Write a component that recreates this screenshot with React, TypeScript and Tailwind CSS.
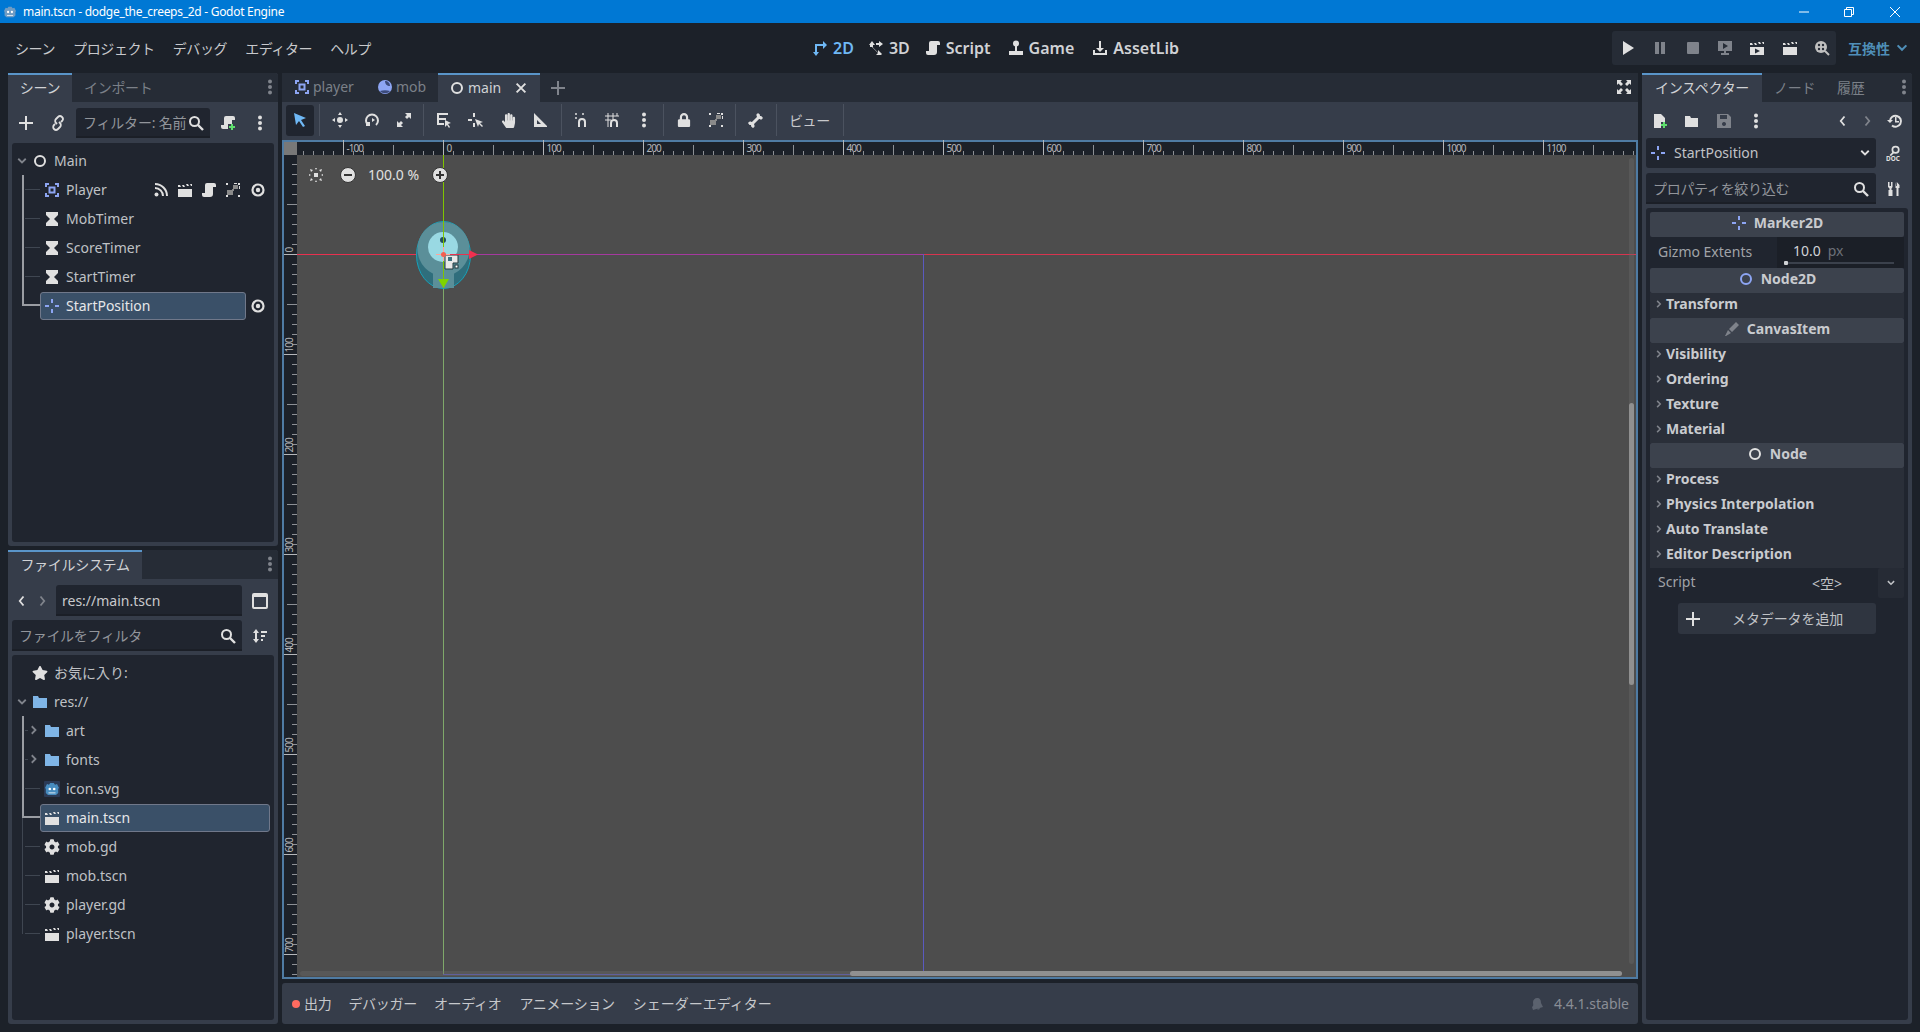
import type { ReactNode } from "react";
import { FaBone, FaCog, FaHandPaper, FaLock, FaStar } from "react-icons/fa";

const FONT = { fontFamily: '"Noto Sans", "Noto Sans CJK JP", sans-serif' };

function Svg({ children, className = "w-4 h-4", fill = "#e0e0e0" }: { children: ReactNode; className?: string; fill?: string }) {
    return (
        <svg viewBox="0 0 16 16" className={`${className} shrink-0`} fill={fill}>
            {children}
        </svg>
    );
}

const Ring = ({ color = "#e0e0e0" }: { color?: string }) => (
    <Svg fill="none">
        <circle cx="8" cy="8" r="5" stroke={color} strokeWidth="2" />
    </Svg>
);
const Marker = ({ color = "#8da5f3" }: { color?: string }) => (
    <Svg fill={color}>
        <path d="M7 1h2v4H7zM7 11h2v4H7zM1 7h4v2H1zM11 7h4v2h-4z" />
    </Svg>
);
const Body2D = () => (
    <Svg fill="#8da5f3">
        <path d="M1 1h4v2H3v2H1zM11 1h4v4h-2V3h-2zM1 11h2v2h2v2H1zM13 11h2v4h-4v-2h2z" />
        <path fillRule="evenodd" d="M4.500 4.500h7v7h-7zM6.500 6.500v3h3v-3z" />
    </Svg>
);
const Timer = () => (
    <Svg>
        <path d="M2 1h12v3l-4 4 4 4v3H2v-3l4-4-4-4z" />
    </Svg>
);
const Eye = () => (
    <Svg fill="none">
        <circle cx="8" cy="8" r="5.500" stroke="#e0e0e0" strokeWidth="2.200" />
        <circle cx="8" cy="8" r="2.200" fill="#e0e0e0" />
    </Svg>
);
const Dots = ({ fill = "#e0e0e0" }: { fill?: string }) => (
    <Svg fill={fill}>
        <circle cx="8" cy="2.500" r="2" />
        <circle cx="8" cy="8" r="2" />
        <circle cx="8" cy="13.500" r="2" />
    </Svg>
);
const Plus = () => (
    <Svg>
        <path d="M7 1h2v6h6v2H9v6H7V9H1V7h6z" />
    </Svg>
);
const Search = () => (
    <Svg fill="none">
        <circle cx="6.500" cy="6.500" r="4.500" stroke="#e0e0e0" strokeWidth="2" />
        <path d="M10 10l5 5" stroke="#e0e0e0" strokeWidth="2.400" />
    </Svg>
);
const Folder = () => (
    <Svg fill="#7fb5e6">
        <path d="M1 2h5l1 2h8v10H1z" />
    </Svg>
);
const Clapper = () => (
    <Svg>
        <path d="M1 7h14v8H1zM1 3h2l1 2H1zM5 3h2l1 2H6zM9 2h2l1 2h-2zM13 2h2v2h-1z" />
    </Svg>
);
const Scroll = ({ fill = "#e0e0e0" }: { fill?: string }) => (
    <Svg fill={fill}>
        <path d="M6 1h7a2 2 0 0 1 2 2v2h-3v7a3 3 0 0 1-3 3H3a2 2 0 0 1-2-2v-2h3V3a2 2 0 0 1 2-2z" />
    </Svg>
);
const Chevron = ({ dir, fill = "#80848c", className = "w-3 h-3" }: { dir: "r" | "d" | "l"; fill?: string; className?: string }) => {
    const d = dir === "r" ? "M5 3l5 5-5 5" : dir === "d" ? "M3 5l5 5 5-5" : "M10 2L5 8l5 6";
    return (
        <svg viewBox="0 0 16 16" className={`${className} shrink-0`} fill="none">
            <path d={d} stroke={fill} strokeWidth="2.400" />
        </svg>
    );
};
const Snap = () => (
    <Svg>
        <path d="M1 1h2v2H1zM13 1h2v2h-2zM1 13h2v2H1zM13 13h2v2h-2zM9 1h3v1H9zM14 4h1v3h-1z" />
        <path d="M8 3h5v4H8zM2 8h6v5H2zM7 7h2v2H7z" fill="#8a8a8a" />
    </Svg>
);
const GodotMark = ({ className = "w-4 h-4", bg, body = "#478cbf" }: { className?: string; bg?: string; body?: string }) => (
    <svg viewBox="0 0 16 16" className={`${className} shrink-0`}>
        {bg && <rect width="16" height="16" rx="1" fill={bg} />}
        <path d="M3 3l2 .8L6.200 2h3.600L11 3.800 13 3l2 4-.8 .8V12l-2.200 2H4l-2.200-2V7.800L1 7z" fill={body} />
        <circle cx="5.800" cy="8" r="1.300" fill="#fff" />
        <circle cx="10.200" cy="8" r="1.300" fill="#fff" />
        <path d="M4.500 11.500h7v.8h-7z" fill="#fff" />
    </svg>
);
const Clap = ({ play }: { play?: boolean }) => (
    <Svg>
        <path d="M1 7h14v8H1zM1 3h2l1 2H1zM5 3h2l1 2H6zM9 2h2l1 2h-2zM13 2h2v2h-1z" />
        {play && <path d="M6 8.500l5 2.500-5 2.500z" fill="#262c36" />}
    </Svg>
);

const Sep = () => <div className="w-px h-[32px] bg-[#4b525f] shrink-0" />;

function Tool({ children }: { children: ReactNode }) {
    return <div className="w-[32px] h-[31px] flex items-center justify-center shrink-0">{children}</div>;
}

const thickV = "bg-[#9a9da3] w-[2px]";
const thinV = "bg-[#3f4651] w-px";

type RowProps = {
    icon: ReactNode;
    label: string;
    selected?: boolean;
    upper?: string;
    lower?: string;
    hline?: "thick" | "thin";
    arrow?: boolean;
    boxW?: string;
    extras?: ReactNode;
    eye?: boolean;
};

function Row({ icon, label, selected, upper, lower, hline, arrow, boxW = "w-[206px]", extras, eye }: RowProps) {
    return (
        <div className="relative h-[29px] pl-[28px] flex items-center">
            {upper && <span className={`absolute left-[10px] top-0 h-[15px] ${upper}`} />}
            {lower && <span className={`absolute left-[10px] top-[15px] h-[14px] ${lower}`} />}
            {hline === "thick" && <span className="absolute left-[10px] top-[13px] w-[18px] h-[2px] bg-[#9a9da3]" />}
            {hline === "thin" && <span className="absolute left-[13px] top-[14px] w-[15px] h-px bg-[#3f4651]" />}
            {arrow && (
                <span className="absolute left-[16px] top-[8px] bg-[#20252f]">
                    <Chevron dir="r" />
                </span>
            )}
            <div
                className={`${boxW} h-[28px] pl-[3px] pr-[4px] flex items-center gap-[6px] rounded-[3px] border ${
                    selected ? "bg-[#3a5068] border-[#70788a] text-[#e6e7e9]" : "border-transparent text-[#bfc1c5]"
                }`}
            >
                {icon}
                <span className="text-[14px] leading-none">{label}</span>
                {extras && <div className="ml-auto flex items-center gap-[8px]">{extras}</div>}
            </div>
            {eye && (
                <div className="ml-[4px]">
                    <Eye />
                </div>
            )}
        </div>
    );
}

function RootRow({ icon, label, chevron = true }: { icon: ReactNode; label: string; chevron?: boolean }) {
    return (
        <div className="h-[29px] pl-[4px] flex items-center text-[#bfc1c5]">
            <div className="w-[12px] mr-[4px]">{chevron && <Chevron dir="d" />}</div>
            {icon}
            <span className="ml-[6px] text-[14px] leading-none">{label}</span>
        </div>
    );
}

function DockTabs({ children }: { children: ReactNode }) {
    return <div className="h-[29px] bg-[#262c36] rounded-t-[3px] flex items-stretch shrink-0 relative">{children}</div>;
}

function ActiveTab({ label, w }: { label: string; w: string }) {
    return (
        <div className={`${w} bg-[#363d4a] border-t-2 border-[#5a95c9] pb-[2px] flex items-center justify-center text-[14px] tracking-[-0.3px] text-[#d0d2d5]`}>
            {label}
        </div>
    );
}

function InactiveTab({ label, ml }: { label: string; ml: string }) {
    return <span className={`${ml} self-center pb-[1px] text-[14px] tracking-[-0.3px] text-[#7b8088]`}>{label}</span>;
}

function Field({ children, className }: { children: ReactNode; className: string }) {
    return (
        <div className={`${className} bg-[#20252f] border-b-2 border-[#1b1f27] rounded-t-[3px] pt-[2px] flex items-center text-[14px]`}>
            {children}
        </div>
    );
}

function Section({ icon, title }: { icon: ReactNode; title: string }) {
    return (
        <div className="h-[25px] bg-[#3c424d] rounded-[2px] pb-[4px] flex items-center justify-center gap-[7px] text-[14px] font-bold text-[#c9cbcf] shrink-0">
            {icon}
            <span>{title}</span>
        </div>
    );
}

function Prop({ label }: { label: string }) {
    return (
        <div className="h-[25px] bg-[#2a2f39] pb-[4px] flex items-center pl-[4px] gap-[2px] text-[14px] font-bold text-[#c9cbcf] shrink-0">
            <Chevron dir="r" className="w-[10px] h-[10px]" />
            <span>{label}</span>
        </div>
    );
}

function TopRuler() {
    const ticks = [];
    for (let v = -140; v <= 1190; v += 10) {
        const x = v + 146.5;
        const h = v % 100 === 0 ? 15 : v % 50 === 0 ? 10 : 4;
        ticks.push(<line key={v} x1={x} x2={x} y1={15 - h} y2={15} stroke={v % 100 === 0 ? "#b5b7ba" : "#8d9095"} />);
        if (v % 100 === 0) {
            ticks.push(
                <text key={`t${v}`} x={x + 3} y={12} fontSize="10" letterSpacing="-1" fill="#b5b7ba">
                    {v}
                </text>
            );
        }
    }
    return (
        <svg width="1339" height="15" className="block overflow-visible" style={FONT}>
            {ticks}
        </svg>
    );
}

function LeftRuler() {
    const ticks = [];
    for (let v = -90; v <= 720; v += 10) {
        const y = v + 99.5;
        const w = v % 100 === 0 ? 13 : v % 50 === 0 ? 10 : 5;
        ticks.push(<line key={v} x1={13 - w} x2={13} y1={y} y2={y} stroke={v % 100 === 0 ? "#b5b7ba" : "#8d9095"} />);
        if (v % 100 === 0) {
            ticks.push(
                <text key={`t${v}`} fontSize="10" letterSpacing="-1" fill="#b5b7ba" transform={`translate(9 ${y - 2}) rotate(-90)`}>
                    {v}
                </text>
            );
        }
    }
    return (
        <svg width="13" height="822" className="block bg-[#1c2129] shrink-0 overflow-visible" style={FONT}>
            {ticks}
        </svg>
    );
}

function Canvas() {
    return (
        <svg width="1339" height="822" className="absolute inset-0">
            <line x1="146.5" x2="146.5" y1="0" y2="99" stroke="#7fc400" />
            <line x1="146.5" x2="146.5" y1="99" y2="819" stroke="#7fa86a" />
            <line x1="0" x2="172" y1="99.5" y2="99.5" stroke="#e8304f" />
            <line x1="172" x2="626" y1="99.5" y2="99.5" stroke="#a5399f" />
            <line x1="626" x2="1339" y1="99.5" y2="99.5" stroke="#d8344f" />
            <line x1="626.5" x2="626.5" y1="99" y2="819" stroke="#5a5ac0" />
            <line x1="146" x2="626" y1="819.5" y2="819.5" stroke="#5a5ac0" />
            <g transform="translate(146 99)">
                <ellipse cx="0.500" cy="1" rx="27" ry="33.500" fill="#2f6e7c" stroke="#17a2ba" />
                <ellipse cx="0.500" cy="-5" rx="26" ry="27" fill="#5b8f99" />
                <rect x="-10" y="16" width="21" height="18" fill="#5b8f99" />
                <circle cx="0" cy="-7" r="15" fill="#99d9e3" />
                <circle cx="0" cy="-14" r="3" fill="#22505a" />
                <line x1="0.500" x2="0.500" y1="-34" y2="34" stroke="#7fc400" />
                <path d="M2 1h13v8h-5v6H2z" fill="#e8e8e8" stroke="#22373d" />
                <rect x="5" y="3" width="4" height="4" fill="#3b7080" />
                <rect x="12" y="11" width="3" height="3" fill="#fff" stroke="#22373d" />
                <path d="M-7 0H28V1H-7z" fill="#e8304f" />
                <path d="M0-7h1v14H0zM-7 0h14v1H-7z" fill="#ffa59a" />
                <circle cx="0.500" cy="0.500" r="2.500" fill="#f25f52" />
                <path d="M26-4l9 4.500-9 4.500z" fill="#f0304f" />
                <path d="M-5 25h11l-5.500 9z" fill="#7fd400" />
            </g>
        </svg>
    );
}

function Viewport() {
    return (
        <div className="h-[839px] border-2 border-[#4f7ba3] flex flex-col shrink-0">
            <div className="flex h-[13px]">
                <div className="w-[13px] h-[13px] bg-[#787878] shrink-0" />
                <div className="-mt-[2px] h-[15px]">
                    <TopRuler />
                </div>
            </div>
            <div className="flex flex-1 min-h-0">
                <LeftRuler />
                <div className="relative flex-1 bg-[#4d4d4d] overflow-hidden">
                    <Canvas />
                    <div className="absolute left-[11px] top-[12px] flex items-center text-[#e0e0e0] text-[14px]">
                        <Svg>
                            <path d="M2 2l3 1-2 2zM14 2l-1 3-2-2zM2 14l1-3 2 2zM14 14l-3-1 2-2zM6 6h4v4H6zM1 7l2 1-2 1zM15 7l-2 1 2 1zM7 1l1 2 1-2zM7 15l1-2 1 2z" />
                        </Svg>
                        <div className="ml-[16px] w-[16px] h-[16px] rounded-full bg-[#e0e0e0] flex items-center justify-center border border-[#333]">
                            <span className="w-[8px] h-[2px] bg-[#333]" />
                        </div>
                        <span className="ml-[12px] w-[59px] text-[14px] leading-none">100.0 %</span>
                        <div className="ml-[5px] w-[16px] h-[16px] rounded-full bg-[#e0e0e0] flex items-center justify-center border border-[#333] relative">
                            <span className="w-[8px] h-[2px] bg-[#333]" />
                            <span className="absolute left-[6px] top-[3px] w-[2px] h-[8px] bg-[#333]" />
                        </div>
                    </div>
                    <div className="absolute left-[3px] right-[14px] bottom-[1px] h-[5px] bg-[#6a6a6a]/40 rounded-full flex justify-end">
                        <div className="w-[772px] h-full bg-[#909090] rounded-full" />
                    </div>
                    <div className="absolute right-[2px] top-[3px] bottom-[13px] w-[5px] bg-[#6a6a6a]/40 rounded-full">
                        <div className="mt-[245px] h-[282px] bg-[#909090] rounded-full" />
                    </div>
                </div>
            </div>
        </div>
    );
}

function Workspace({ icon, label, active, ml }: { icon: ReactNode; label: string; active?: boolean; ml: string }) {
    return (
        <div className={`${ml} flex items-center gap-[5px] text-[16px] font-semibold ${active ? "text-[#6fb8f5]" : "text-[#d0d2d5]"}`}>
            {icon}
            <span>{label}</span>
        </div>
    );
}

function BottomTab({ label, ml }: { label: string; ml: string }) {
    return <span className={`${ml} text-[14px] tracking-[-0.3px] text-[#c6c8cc]`}>{label}</span>;
}

export default function App() {
    return (
        <div className="w-[1920px] h-[1032px] bg-[#1c2129] flex flex-col overflow-hidden text-[#c8c9cc]" style={FONT}>
            {/* title bar */}
            <div className="h-[23px] bg-[#0078d4] flex items-center text-white shrink-0">
                <div className="ml-[3px] mr-[6px]">
                    <GodotMark className="w-[14px] h-[14px]" body="#6f9cc4" />
                </div>
                <span className="text-[12px] tracking-[-0.28px]">main.tscn - dodge_the_creeps_2d - Godot Engine</span>
                <div className="ml-auto flex items-center">
                    <svg viewBox="0 0 12 12" className="w-[12px] h-[12px] mr-[33px]" stroke="#fff" fill="none">
                        <path d="M1 6h10" />
                    </svg>
                    <svg viewBox="0 0 12 12" className="w-[12px] h-[12px] mr-[34px]" stroke="#fff" fill="none">
                        <path d="M1.500 3.500h7v7h-7zM3.500 3.500v-2h7v7h-2" />
                    </svg>
                    <svg viewBox="0 0 12 12" className="w-[12px] h-[12px] mr-[19px]" stroke="#fff" fill="none">
                        <path d="M1 1l10 10M11 1L1 11" />
                    </svg>
                </div>
            </div>

            {/* menu bar */}
            <div className="h-[50px] flex items-center shrink-0">
                <div className="w-[812px] pl-[15px] flex gap-[18px] text-[14px] tracking-[-0.4px] text-[#c8c9cc]">
                    <span>シーン</span>
                    <span>プロジェクト</span>
                    <span>デバッグ</span>
                    <span>エディター</span>
                    <span>ヘルプ</span>
                </div>
                <Workspace
                    ml="ml-0"
                    active
                    label="2D"
                    icon={
                        <Svg fill="#6fb8f5">
                            <path d="M3 4h8V1l4 4-4 4V6H5v6h2l-3 4-3-4h2z" />
                        </Svg>
                    }
                />
                <Workspace
                    ml="ml-[14px]"
                    label="3D"
                    icon={
                        <Svg>
                            <path d="M1 5l3-4 3 4H5v2.500l5 5V10l4 4-1 1H8l2-2-6-6v0H2V5z" />
                            <path d="M8 3h3V1l4 3-4 3V5H8z" />
                        </Svg>
                    }
                />
                <Workspace ml="ml-[15px]" label="Script" icon={<Scroll />} />
                <Workspace
                    ml="ml-[17px]"
                    label="Game"
                    icon={
                        <Svg>
                            <circle cx="8" cy="3.500" r="3" />
                            <path d="M7 5h2v6H7zM1 11h14v4H1z" />
                        </Svg>
                    }
                />
                <Workspace
                    ml="ml-[18px]"
                    label="AssetLib"
                    icon={
                        <Svg>
                            <path d="M7 1h2v7h3l-4 4-4-4h3zM1 10h2v3h10v-3h2v5H1z" />
                        </Svg>
                    }
                />
                <div className="ml-auto w-[224px] h-[34px] bg-[#262c36] rounded-[3px] flex items-center justify-between pl-[8px] pr-[6px]">
                    <Svg>
                        <path d="M3 1l11 7-11 7z" />
                    </Svg>
                    <Svg fill="#7f838b">
                        <path d="M3 2h4v12H3zM9 2h4v12H9z" />
                    </Svg>
                    <Svg fill="#7f838b">
                        <rect x="2" y="2" width="12" height="12" rx="1" />
                    </Svg>
                    <Svg fill="#7f838b">
                        <path d="M1 1h14v10H9v2h3v2H4v-2h3v-2H1zM6 3v6l5-3z" fillRule="evenodd" />
                    </Svg>
                    <Clap play />
                    <Clap />
                    <Svg fill="#c0c0c0">
                        <circle cx="7" cy="7" r="6" />
                        <circle cx="5" cy="5" r="1.200" fill="#262c36" />
                        <circle cx="9" cy="5" r="1.200" fill="#262c36" />
                        <circle cx="5" cy="9" r="1.200" fill="#262c36" />
                        <circle cx="9" cy="9" r="1.200" fill="#262c36" />
                        <path d="M11 11l4 4" stroke="#c0c0c0" strokeWidth="2" />
                    </Svg>
                </div>
                <span className="ml-[12px] text-[14px] font-semibold text-[#4f8fb8]">互換性</span>
                <div className="ml-[5px] mr-[11px]">
                    <Chevron dir="d" fill="#4f8fb8" className="w-[14px] h-[14px]" />
                </div>
            </div>

            {/* main area */}
            <div className="flex-1 min-h-0 flex gap-[4px] px-[8px] pb-[8px]">
                {/* left docks */}
                <div className="w-[270px] flex flex-col gap-[4px] shrink-0">
                    <div className="h-[473px] bg-[#363d4a] rounded-[3px] flex flex-col shrink-0">
                        <DockTabs>
                            <ActiveTab label="シーン" w="w-[64px]" />
                            <InactiveTab label="インポート" ml="ml-[12px]" />
                            <div className="absolute right-0 top-[6px]">
                                <Dots fill="#80848c" />
                            </div>
                        </DockTabs>
                        <div className="h-[41px] flex items-center shrink-0">
                            <div className="ml-[10px]">
                                <Plus />
                            </div>
                            <div className="ml-[16px]">
                                <Svg fill="none">
                                    <path d="M7 9l-1-1a2.800 2.800 0 0 1 0-4l2-2a2.800 2.800 0 0 1 4 4l-1 1M9 7l1 1a2.800 2.800 0 0 1 0 4l-2 2a2.800 2.800 0 0 1-4-4l1-1" stroke="#e0e0e0" strokeWidth="1.800" />
                                </Svg>
                            </div>
                            <Field className="ml-[10px] w-[134px] h-[30px] pl-[7px] pr-[6px] text-[#92959b]">
                                <span className="flex-1 whitespace-nowrap overflow-hidden tracking-[-0.2px]">フィルター: 名前</span>
                                <Search />
                            </Field>
                            <div className="ml-[10px]">
                                <Svg>
                                    <path d="M6 1h7a2 2 0 0 1 2 2v2h-3v4H8v5H3a2 2 0 0 1-2-2v-2h3V3a2 2 0 0 1 2-2z" />
                                    <path d="M11 9h2v2h2v2h-2v2h-2v-2H9v-2h2z" fill="#5fe06e" />
                                </Svg>
                            </div>
                            <div className="ml-[16px]">
                                <Dots />
                            </div>
                        </div>
                        <div className="mx-[4px] flex-1 min-h-0 mb-[4px] bg-[#20252f] rounded-[3px] pt-[3px]">
                            <RootRow icon={<Ring />} label="Main" />
                            <Row
                                icon={<Body2D />}
                                label="Player"
                                upper={thickV}
                                lower={thickV}
                                hline="thin"
                                eye
                                extras={
                                    <>
                                        <Svg>
                                            <circle cx="3.500" cy="12.500" r="2" />
                                            <path d="M2 6a8 8 0 0 1 8 8M2 2a12 12 0 0 1 12 12" stroke="#e0e0e0" strokeWidth="2" fill="none" />
                                        </Svg>
                                        <Clap />
                                        <Scroll />
                                        <Snap />
                                    </>
                                }
                            />
                            <Row icon={<Timer />} label="MobTimer" upper={thickV} lower={thickV} hline="thin" />
                            <Row icon={<Timer />} label="ScoreTimer" upper={thickV} lower={thickV} hline="thin" />
                            <Row icon={<Timer />} label="StartTimer" upper={thickV} lower={thickV} hline="thin" />
                            <Row icon={<Marker />} label="StartPosition" upper={thickV} hline="thick" selected eye />
                        </div>
                    </div>

                    <div className="flex-1 min-h-0 bg-[#363d4a] rounded-[3px] flex flex-col">
                        <DockTabs>
                            <ActiveTab label="ファイルシステム" w="w-[134px]" />
                            <div className="absolute right-0 top-[6px]">
                                <Dots fill="#80848c" />
                            </div>
                        </DockTabs>
                        <div className="flex items-center h-[31px] shrink-0 mt-[6px]">
                            <div className="ml-[8px]">
                                <Chevron dir="l" fill="#e0e0e0" className="w-[12px] h-[16px]" />
                            </div>
                            <div className="ml-[8px]">
                                <Chevron dir="l" fill="#80848c" className="w-[12px] h-[16px] rotate-180" />
                            </div>
                            <Field className="ml-[8px] w-[186px] h-[31px] pl-[6px] text-[#c8c9cc]">res://main.tscn</Field>
                            <div className="ml-[10px]">
                                <Svg fill="none">
                                    <rect x="1" y="1" width="14" height="14" rx="1" stroke="#e0e0e0" strokeWidth="2" />
                                    <path d="M1 2h14v2H1z" fill="#e0e0e0" />
                                </Svg>
                            </div>
                        </div>
                        <div className="flex items-center h-[31px] shrink-0 ml-[4px] mt-[4px]">
                            <Field className="w-[230px] h-[31px] pl-[7px] pr-[6px] text-[#92959b]">
                                <span className="flex-1 tracking-[-0.3px]">ファイルをフィルタ</span>
                                <Search />
                            </Field>
                            <div className="ml-[10px]">
                                <Svg>
                                    <path d="M4 1l3 4H5v6h2l-3 4-3-4h2V5H1zM9 3h6v2H9zM9 7h4v2H9zM9 11h2v2H9z" />
                                </Svg>
                            </div>
                        </div>
                        <div className="mx-[4px] mt-[4px] flex-1 min-h-0 mb-[4px] bg-[#20252f] rounded-[3px] pt-[3px]">
                            <RootRow
                                chevron={false}
                                label="お気に入り:"
                                icon={
                                    <span className="text-[#e0e0e0] text-[16px]">
                                        <FaStar />
                                    </span>
                                }
                            />
                            <RootRow icon={<Folder />} label="res://" />
                            <Row icon={<Folder />} label="art" upper={thickV} lower={thickV} hline="thin" arrow />
                            <Row icon={<Folder />} label="fonts" upper={thickV} lower={thickV} hline="thin" arrow />
                            <Row icon={<GodotMark bg="#2b3a55" />} label="icon.svg" upper={thickV} lower={thickV} hline="thin" />
                            <Row icon={<Clapper />} label="main.tscn" upper={thickV} lower={thinV} hline="thick" selected boxW="w-[230px]" />
                            <Row icon={<span className="text-[#e0e0e0] text-[16px]"><FaCog /></span>} label="mob.gd" upper={thinV} lower={thinV} hline="thin" />
                            <Row icon={<Clapper />} label="mob.tscn" upper={thinV} lower={thinV} hline="thin" />
                            <Row icon={<span className="text-[#e0e0e0] text-[16px]"><FaCog /></span>} label="player.gd" upper={thinV} lower={thinV} hline="thin" />
                            <Row icon={<Clapper />} label="player.tscn" upper={thinV} hline="thin" />
                        </div>
                    </div>
                </div>

                {/* center */}
                <div className="flex-1 min-w-0 flex flex-col gap-[4px]">
                    <div className="flex flex-col shrink-0">
                        <div className="h-[29px] flex items-stretch bg-[#262c36]">
                            <div className="w-[95px] pl-[12px] pb-[2px] flex items-center gap-[3px] text-[14px] text-[#7b8088]">
                                <Body2D />
                                <span>player</span>
                            </div>
                            <div className="w-[61px] pb-[2px] flex items-center gap-[3px] text-[14px] text-[#7b8088]">
                                <Svg fill="#8da5f3">
                                    <circle cx="8" cy="8" r="7" />
                                    <path d="M3 12c3-1 7-1 10 0-2 3-8 3-10 0zM8 2c3 0 5 2 5 5-3 0-5-2-5-5z" fill="#3b4a7a" />
                                </Svg>
                                <span>mob</span>
                            </div>
                            <div className="w-[102px] bg-[#363d4a] border-t-2 border-[#5a95c9] pb-[2px] pl-[11px] flex items-center text-[14px] text-[#d0d2d5]">
                                <Ring />
                                <span className="ml-[3px]">main</span>
                                <div className="ml-[13px]">
                                    <Svg fill="none" className="w-[14px] h-[14px]">
                                        <path d="M3 3l10 10M13 3L3 13" stroke="#e0e0e0" strokeWidth="2.200" />
                                    </Svg>
                                </div>
                            </div>
                            <div className="ml-[10px] self-center">
                                <Svg fill="#80848c">
                                    <path d="M7 1h2v6h6v2H9v6H7V9H1V7h6z" />
                                </Svg>
                            </div>
                            <div className="ml-auto mr-[6px] self-center pb-[2px]">
                                <Svg>
                                    <path d="M1 1h5L4.500 2.500 7 5 5 7 2.500 4.500 1 6zM15 1v5l-1.500-1.500L11 7 9 5l2.500-2.500L10 1zM1 15v-5l1.500 1.500L5 9l2 2-2.500 2.500L6 15zM15 15h-5l1.500-1.500L9 11l2-2 2.500 2.500L15 10z" />
                                </Svg>
                            </div>
                        </div>
                        <div className="h-[38px] bg-[#363d4a] flex items-center pl-[4px] pb-[2px]">
                            <div className="w-[28px] h-[31px] bg-[#20252f] rounded-[3px] flex items-center justify-center shrink-0">
                                <Svg fill="#6fb8f5">
                                    <path d="M2 1l12 5-5 2 4 6-2 1-4-6-3 4z" />
                                </Svg>
                            </div>
                            <div className="w-[5px] shrink-0" />
                            <Sep />
                            <div className="w-[4px] shrink-0" />
                            <Tool>
                                <Svg>
                                    <path d="M8 0l2 3H6zM8 16l-2-3h4zM0 8l3-2v4zM16 8l-3 2V6z" />
                                    <circle cx="8" cy="8" r="3" />
                                </Svg>
                            </Tool>
                            <Tool>
                                <Svg fill="none">
                                    <path d="M4 13a6 6 0 1 1 8 0" stroke="#e0e0e0" strokeWidth="2" />
                                    <path d="M8 6l3 2-3 2z" fill="#e0e0e0" />
                                    <path d="M2 10h4v4H2z" fill="#e0e0e0" />
                                </Svg>
                            </Tool>
                            <Tool>
                                <Svg>
                                    <path d="M9 1h6v6l-2-2-2 2-2-2 2-2zM1 9l2 2 2-2 2 2-2 2 2 2H1z" />
                                </Svg>
                            </Tool>
                            <div className="w-[3px] shrink-0" />
                            <Sep />
                            <div className="w-[4px] shrink-0" />
                            <Tool>
                                <Svg>
                                    <path d="M1 1h11v2H3v3h7v2H3v3h5v2H1z" />
                                    <path d="M9 8l6 3-3 1 2 3-1 1-2-3-2 2z" />
                                </Svg>
                            </Tool>
                            <Tool>
                                <Svg>
                                    <path d="M5 1h2v4H5zM0 7h4v2H0zM5 11h2v4H5z" />
                                    <path d="M7 7l8 3-3 1 3 3-1 1-3-3-1 3z" />
                                </Svg>
                            </Tool>
                            <Tool>
                                <span className="text-[#e0e0e0] text-[15px]">
                                    <FaHandPaper />
                                </span>
                            </Tool>
                            <Tool>
                                <Svg>
                                    <path fillRule="evenodd" d="M2 1l13 13v1H2zM5 8v4h4z" />
                                </Svg>
                            </Tool>
                            <div className="w-[5px] shrink-0" />
                            <Sep />
                            <div className="w-[2px] shrink-0" />
                            <Tool>
                                <Svg fill="none">
                                    <path d="M3 2h2M3 6h2M10 2h2" stroke="#e0e0e0" strokeWidth="1.500" />
                                    <path d="M7 15V10a3 3 0 0 1 6 0v5" stroke="#e0e0e0" strokeWidth="2" />
                                </Svg>
                            </Tool>
                            <Tool>
                                <Svg fill="none">
                                    <path d="M1 4h14M1 8h6M4 1v14M9 1v6M13 1v3" stroke="#e0e0e0" />
                                    <path d="M7 15v-4a3 3 0 0 1 6 0v4" stroke="#e0e0e0" strokeWidth="2" />
                                </Svg>
                            </Tool>
                            <Tool>
                                <Dots />
                            </Tool>
                            <div className="w-[3px] shrink-0" />
                            <Sep />
                            <div className="w-[4px] shrink-0" />
                            <Tool>
                                <span className="text-[#e0e0e0] text-[14px]">
                                    <FaLock />
                                </span>
                            </Tool>
                            <Tool>
                                <Snap />
                            </Tool>
                            <div className="w-[3px] shrink-0" />
                            <Sep />
                            <div className="w-[3px] shrink-0" />
                            <Tool>
                                <span className="text-[#e0e0e0] text-[15px] -rotate-45">
                                    <FaBone />
                                </span>
                            </Tool>
                            <div className="w-[5px] shrink-0" />
                            <Sep />
                            <span className="ml-[12px] text-[14px] tracking-[-0.4px] text-[#c8c9cc]">ビュー</span>
                            <div className="ml-[13px]">
                                <Sep />
                            </div>
                        </div>
                        <Viewport />
                    </div>
                    <div className="flex-1 min-h-0 bg-[#363d4a] rounded-[3px] flex items-center pr-[9px]">
                        <span className="ml-[10px] w-[8px] h-[8px] rounded-full bg-[#ff6b60]" />
                        <BottomTab ml="ml-[4px]" label="出力" />
                        <BottomTab ml="ml-[17px]" label="デバッガー" />
                        <BottomTab ml="ml-[17px]" label="オーディオ" />
                        <BottomTab ml="ml-[18px]" label="アニメーション" />
                        <span className="ml-[18px] text-[14px] text-[#c6c8cc]">シェーダーエディター</span>
                        <div className="ml-auto mr-[9px]">
                            <Svg fill="#5b626e">
                                <path d="M8 2c3 0 4 2 4 5l2 4-10 3-1-3c2-1 1-3 1-5 0-2 2-4 4-4zM8 13l3-1a2 2 0 0 1-3 1z" />
                            </Svg>
                        </div>
                        <span className="text-[14px] text-[#8a8e96]">4.4.1.stable</span>
                    </div>
                </div>

                {/* inspector */}
                <div className="w-[270px] bg-[#363d4a] rounded-[3px] flex flex-col shrink-0">
                    <DockTabs>
                        <ActiveTab label="インスペクター" w="w-[120px]" />
                        <InactiveTab label="ノード" ml="ml-[12px]" />
                        <InactiveTab label="履歴" ml="ml-[22px]" />
                        <div className="absolute right-0 top-[6px]">
                            <Dots fill="#80848c" />
                        </div>
                    </DockTabs>
                    <div className="h-[36px] flex items-center shrink-0 pl-[10px] pr-[10px] pt-[1px]">
                        <Svg>
                            <path d="M2 1h7l4 4v4H9v6H2z" />
                            <path d="M11 9h2v2h2v2h-2v2h-2v-2H9v-2h2z" fill="#5fe06e" />
                        </Svg>
                        <div className="ml-[16px]">
                            <Svg>
                                <path d="M1 3h5l1 2h7v9H1z" />
                            </Svg>
                        </div>
                        <div className="ml-[16px]">
                            <Svg fill="#7f838b">
                                <path fillRule="evenodd" d="M1 1h11l3 3v11H1zM4 2v4h7V2zM8 9a2 2 0 1 0 .01 0z" />
                            </Svg>
                        </div>
                        <div className="ml-[16px]">
                            <Dots />
                        </div>
                        <div className="ml-auto">
                            <Chevron dir="l" fill="#e0e0e0" className="w-[12px] h-[16px]" />
                        </div>
                        <div className="ml-[12px]">
                            <Chevron dir="l" fill="#80848c" className="w-[12px] h-[16px] rotate-180" />
                        </div>
                        <div className="ml-[14px] mr-[-1px]">
                            <Svg fill="none">
                                <path d="M3 8a5.500 5.500 0 1 1 2 4.500" stroke="#e0e0e0" strokeWidth="2" />
                                <path d="M0 7h6l-3 3zM8 4h1.500v4H12v1.500H8z" fill="#e0e0e0" />
                            </Svg>
                        </div>
                    </div>
                    <div className="flex items-center shrink-0 ml-[4px]">
                        <div className="w-[230px] h-[30px] bg-[#20252f] rounded-[3px] flex items-center pl-[4px] pr-[5px] text-[14px] text-[#c0c2c6]">
                            <Marker />
                            <span className="ml-[8px] flex-1 pb-[2px]">StartPosition</span>
                            <Chevron dir="d" fill="#e0e0e0" />
                        </div>
                        <div className="ml-[10px] flex flex-col items-center w-[16px]">
                            <svg viewBox="0 0 16 16" className="w-[17px] h-[17px]" fill="none" style={FONT}>
                                <circle cx="9" cy="4.500" r="3" stroke="#e0e0e0" strokeWidth="1.600" />
                                <path d="M7 7l-3 3" stroke="#e0e0e0" strokeWidth="1.600" />
                                <text x="0" y="15.500" fontSize="6" fontWeight="700" fill="#e0e0e0">DOC</text>
                            </svg>
                        </div>
                    </div>
                    <div className="flex items-center shrink-0 ml-[4px] mt-[5px]">
                        <Field className="w-[230px] h-[31px] pl-[7px] pr-[7px] text-[#92959b]">
                            <span className="flex-1 tracking-[-0.3px] pb-[1px]">プロパティを絞り込む</span>
                            <Search />
                        </Field>
                        <div className="ml-[10px]">
                            <Svg>
                                <path d="M2 1h1.500v4h1.500V1h1.500v5L5.500 7.500V9h1v6h-4V9h1V7.500L2 6zM10 1v4h.8V1l2.700 3v3h-1v8h-2V7h-1V4z" />
                            </Svg>
                        </div>
                    </div>
                    <div className="mx-[4px] mt-[4px] mb-[4px] flex-1 min-h-0 bg-[#20252f] rounded-[3px] px-[4px] pt-[4px] flex flex-col">
                        <Section icon={<Marker />} title="Marker2D" />
                        <div className="h-[31px] flex items-stretch text-[14px] text-[#a0a3a8] shrink-0">
                            <span className="w-[127px] pl-[8px] self-center pb-[3px]">Gizmo Extents</span>
                            <div className="flex-1 bg-[#1b1f27] relative flex items-center pl-[16px] pb-[5px]">
                                <span className="text-[#d0d2d5]">10.0</span>
                                <span className="ml-[7px] text-[#6c7078]">px</span>
                                <div className="absolute left-[7px] right-[10px] bottom-[4px] h-[2px] bg-[#3b414c]" />
                                <div className="absolute left-[7px] bottom-[3px] w-[4px] h-[4px] bg-[#d0d2d5] rounded-[1px]" />
                            </div>
                        </div>
                        <Section icon={<Ring color="#8da5f3" />} title="Node2D" />
                        <Prop label="Transform" />
                        <Section
                            icon={
                                <Svg fill="#7f838b">
                                    <path d="M12 1l3 3-7 7-3-3zM4 9l3 3-5 3H1z" />
                                </Svg>
                            }
                            title="CanvasItem"
                        />
                        <Prop label="Visibility" />
                        <Prop label="Ordering" />
                        <Prop label="Texture" />
                        <Prop label="Material" />
                        <Section icon={<Ring />} title="Node" />
                        <Prop label="Process" />
                        <Prop label="Physics Interpolation" />
                        <Prop label="Auto Translate" />
                        <Prop label="Editor Description" />
                        <div className="h-[30px] flex items-center text-[14px] text-[#a0a3a8] shrink-0">
                            <span className="w-[140px] pl-[8px] pb-[3px]">Script</span>
                            <span className="w-[74px] text-center text-[#c0c2c6]">&lt;空&gt;</span>
                            <div className="ml-auto w-[26px] h-[30px] bg-[#262b35] rounded-[2px] flex items-center justify-center">
                                <Chevron dir="d" fill="#c0c2c6" className="w-[10px] h-[10px]" />
                            </div>
                        </div>
                        <div className="ml-[28px] mt-[5px] w-[198px] h-[31px] bg-[#2f3540] rounded-[3px] flex items-center text-[14px] text-[#c0c2c6] shrink-0">
                            <div className="ml-[7px]">
                                <Plus />
                            </div>
                            <span className="ml-[31px] tracking-[-0.1px]">メタデータを追加</span>
                        </div>
                    </div>
                </div>
            </div>
        </div>
    );
}
